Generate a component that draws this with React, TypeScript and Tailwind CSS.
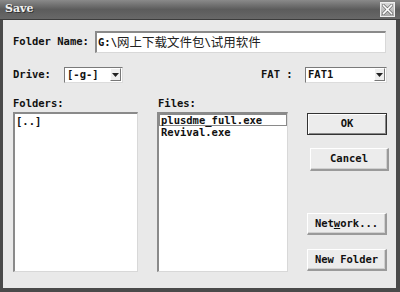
import React from 'react';

const mono = "font-['DejaVu_Sans_Mono',monospace]";

function ArrowBox() {
    return (
        <div className="w-[11px] h-[13px] mr-[1px] flex items-center justify-center bg-[#efefef] border-t border-l border-white border-b border-r border-b-[#777] border-r-[#777]">
            <svg width="7" height="4" viewBox="0 0 7 4">
                <path d="M0 0h7L3.5 4z" fill="#222" />
            </svg>
        </div>
    );
}

function Select({ value, width }: { value: string; width: string }) {
    return (
        <div className={`${width} h-[16px] flex items-center justify-between bg-white border-t border-l border-[#7a7a7a] border-b border-r border-b-[#dcdcdc] border-r-[#dcdcdc]`}>
            <span className="pl-[2px] text-[10.5px] leading-none font-bold text-[#111]">{value}</span>
            <ArrowBox />
        </div>
    );
}

function Button({ label, isDefault = false, className = '' }: { label: React.ReactNode; isDefault?: boolean; className?: string }) {
    return (
        <div
            className={`h-[22px] flex items-center justify-center bg-[#ececec] text-[10.5px] font-bold text-[#111] ${
                isDefault
                    ? 'border border-[#333] shadow-[inset_1px_1px_0_#fff,inset_-1px_-1px_0_#888]'
                    : 'border-t border-l border-white border-b-2 border-r-2 border-b-[#9a9a9a] border-r-[#9a9a9a] shadow-[inset_-1px_-1px_0_#d0d0d0]'
            } ${className}`}
        >
            {label}
        </div>
    );
}

export default function App() {
    return (
        <div className={`w-[400px] h-[292px] bg-[#4a4a4a] pl-[3px] pr-[4px] pb-[4px] flex flex-col ${mono}`}>
            {/* Title bar */}
            <div className="h-[20px] -ml-[3px] -mr-[4px] pl-[5px] pr-[5px] flex items-center justify-between bg-linear-to-b from-[#8a8a8a] via-[#5c5c5c] to-[#686868] border-b border-[#3c3c3c]">
                <span className="text-[11px] font-bold text-[#f2f2f2] font-['DejaVu_Serif',serif] [text-shadow:1px_1px_0_#333]">Save</span>
                <div className="w-[15px] h-[15px] flex items-center justify-center bg-linear-to-b from-[#d8d8d8] to-[#a8a8a8] border border-[#eeeeee]">
                    <svg width="11" height="11" viewBox="0 0 11 11">
                        <path d="M1.5 1.5l8 8M9.5 1.5l-8 8" stroke="#666" strokeWidth="3" strokeLinecap="square" />
                        <path d="M1.5 1.5l8 8M9.5 1.5l-8 8" stroke="#fff" strokeWidth="1.6" strokeLinecap="square" />
                    </svg>
                </div>
            </div>

            {/* Body */}
            <div className="flex-1 bg-[#e9e9e9] pl-[10px] pr-[9px] pt-[11px]">
                {/* Folder name */}
                <div className="flex items-center h-[22px]">
                    <span className="w-[82px] text-[10.5px] font-bold text-[#111]">Folder Name:</span>
                    <div className="flex-1 mr-[1px] h-[22px] flex items-center bg-white border-t-2 border-l-2 border-[#8a8a8a] border-b border-r border-b-[#d8d8d8] border-r-[#d8d8d8]">
                        <span className="pl-[1px] text-[10.5px] font-bold text-[#111]">G:\</span>
                        <span className="text-[12.5px] text-[#222] font-['Noto_Sans_CJK_SC',sans-serif] leading-none">网上下载文件包</span>
                        <span className="text-[10.5px] font-bold text-[#111]">\</span>
                        <span className="text-[12.5px] text-[#222] font-['Noto_Sans_CJK_SC',sans-serif] leading-none">试用软件</span>
                    </div>
                </div>

                {/* Drive / FAT */}
                <div className="flex items-center h-[17px] mt-[13px]">
                    <span className="w-[51px] text-[10.5px] font-bold text-[#111]">Drive:</span>
                    <Select value="[-g-]" width="w-[59px]" />
                    <span className="ml-auto w-[44px] text-[10.5px] font-bold text-[#111]">FAT :</span>
                    <Select value="FAT1" width="w-[82px]" />
                </div>

                {/* Lists and buttons */}
                <div className="flex mt-[13px]">
                    <div className="w-[125px] flex flex-col">
                        <span className="h-[16px] text-[10.5px] font-bold text-[#111]">Folders:</span>
                        <div className="h-[160px] bg-white border-t-2 border-l-2 border-[#8a8a8a] border-b border-r border-b-[#d8d8d8] border-r-[#d8d8d8] pl-[1px] pt-[1px]">
                            <div className="text-[10.5px] leading-[12px] font-bold text-[#111]">[..]</div>
                        </div>
                    </div>
                    <div className="w-[131px] ml-[19px] flex flex-col">
                        <span className="h-[16px] pl-[1px] text-[10.5px] font-bold text-[#111]">Files:</span>
                        <div className="h-[160px] bg-white border-t-2 border-l-2 border-[#8a8a8a] border-b border-r border-b-[#d8d8d8] border-r-[#d8d8d8]">
                            <div className="h-[12px] pl-[1px] border border-[#8a8a8a] text-[10.5px] leading-[10px] font-bold text-[#111]">plusdme_full.exe</div>
                            <div className="pl-[2px] text-[10.5px] leading-[12px] font-bold text-[#111]">Revival.exe</div>
                        </div>
                    </div>
                    <div className="w-[80px] ml-[19px] pt-[17px] flex flex-col">
                        <Button label="OK" isDefault />
                        <Button label="Cancel" className="mt-[13px] ml-[3px] -mr-[2px] h-[23px]" />
                        <Button
                            label={
                                <span>
                                    Net<span className="underline">w</span>ork...
                                </span>
                            }
                            className="mt-[42px] h-[21px]"
                        />
                        <Button label="New Folder" className="mt-[14px]" />
                    </div>
                </div>
            </div>
        </div>
    );
}
